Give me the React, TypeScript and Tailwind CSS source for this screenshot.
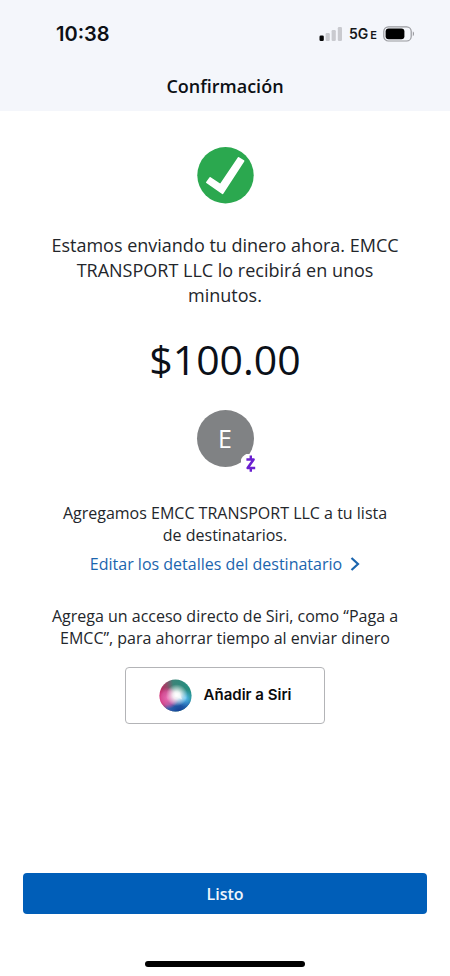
function StatusIcons() {
  return (
    <div className="flex items-center gap-[6px]">
      <svg width="24" height="16" viewBox="0 0 24 16" aria-hidden="true">
        <rect x="0.5" y="9.5" width="4.3" height="5.5" rx="1.3" fill="#050506" />
        <rect x="6.6" y="7" width="4.2" height="8" rx="1.2" fill="#c9cacf" />
        <rect x="12.6" y="4" width="4.2" height="11" rx="1.2" fill="#c9cacf" />
        <rect x="18.8" y="1" width="4.2" height="14" rx="1.2" fill="#c9cacf" />
      </svg>
      <span className="flex items-baseline gap-[2px] font-['Inter',sans-serif] text-[14px] leading-5 font-semibold text-[#17181b]">
        5G<span className="text-[11px] leading-5">E</span>
      </span>
      <svg width="32" height="16" viewBox="0 0 32 16" aria-hidden="true">
        <rect x="0.8" y="0.8" width="27.4" height="14.2" rx="4.6" fill="none" stroke="#98999e" strokeWidth="1.2" />
        <rect x="2.6" y="2.6" width="18.8" height="10.6" rx="3" fill="#000" />
        <path d="M29.8 5.6c1.6.5 1.6 4.1 0 4.6z" fill="#98999e" />
      </svg>
    </div>
  );
}

function CheckBadge() {
  return (
    <svg width="57" height="57" viewBox="0 0 57 57" role="img" aria-label="Completado">
      <circle cx="28.5" cy="28.2" r="28.2" fill="#2ba84f" />
      <path
        d="M41.6 10.8 46.6 14 25.6 46.4 9.8 35.4 13.2 30.8 23.4 37.6Z"
        fill="#fff"
        stroke="#fff"
        strokeWidth="1.6"
        strokeLinejoin="round"
      />
    </svg>
  );
}

function ZelleMark() {
  return (
    <svg width="20" height="20" viewBox="0 0 20 20" role="img" aria-label="Zelle">
      <circle cx="10" cy="10" r="11" fill="#fff" />
      <path d="M9.8 1.6V5M9.8 14.4V17.8" stroke="#6a1fd0" strokeWidth="2.4" />
      <path d="M5.4 5.5H12.6L6.6 13.9H14.2" fill="none" stroke="#6a1fd0" strokeWidth="2.5" strokeLinejoin="round" />
    </svg>
  );
}

function SiriOrb() {
  return (
    <svg width="33" height="33" viewBox="0 0 34 34" aria-hidden="true">
      <defs>
        <linearGradient id="siri-base" x1="0" y1="0.4" x2="1" y2="0.3">
          <stop offset="0" stopColor="#c91f62" />
          <stop offset="0.25" stopColor="#8f4c68" />
          <stop offset="0.45" stopColor="#3c8478" />
          <stop offset="1" stopColor="#1f8f80" />
        </linearGradient>
        <radialGradient id="siri-blue" cx="0.62" cy="1" r="0.55">
          <stop offset="0" stopColor="#123f94" />
          <stop offset="0.7" stopColor="#2a68b8" stopOpacity="0.9" />
          <stop offset="1" stopColor="#2b80c0" stopOpacity="0" />
        </radialGradient>
        <radialGradient id="siri-pink" cx="0.26" cy="0.58" r="0.34">
          <stop offset="0" stopColor="#ea6db3" />
          <stop offset="0.6" stopColor="#e058a5" stopOpacity="0.75" />
          <stop offset="1" stopColor="#e04b9c" stopOpacity="0" />
        </radialGradient>
        <radialGradient id="siri-sky" cx="0.8" cy="0.58" r="0.28">
          <stop offset="0" stopColor="#5cc3f2" />
          <stop offset="1" stopColor="#3aa5df" stopOpacity="0" />
        </radialGradient>
        <radialGradient id="siri-glow" cx="0.54" cy="0.49" r="0.34">
          <stop offset="0" stopColor="#fff" />
          <stop offset="0.35" stopColor="#fff" stopOpacity="0.85" />
          <stop offset="1" stopColor="#fff" stopOpacity="0" />
        </radialGradient>
      </defs>
      <circle cx="17" cy="17" r="16.5" fill="url(#siri-base)" />
      <circle cx="17" cy="17" r="16.5" fill="url(#siri-blue)" />
      <circle cx="17" cy="17" r="16.5" fill="url(#siri-pink)" />
      <circle cx="17" cy="17" r="16.5" fill="url(#siri-sky)" />
      <circle cx="17" cy="17" r="16.5" fill="url(#siri-glow)" />
      <path d="M16 14 21 14 22 17 24 21 19 19 16 18Z" fill="#fff" opacity="0.5" />
    </svg>
  );
}

export default function App() {
  return (
    <div className="flex min-h-screen flex-col bg-white font-['Open_Sans',sans-serif] text-[#23262b]">
      <header className="bg-[#f4f6fb] pb-3 text-[#0d1015]">
        <div className="flex items-center justify-between pt-[22px] pr-[35px] pl-14">
          <span className="font-['Inter',sans-serif] text-xl leading-6 font-semibold">10:38</span>
          <StatusIcons />
        </div>
        <h1 className="pt-7 text-center text-lg leading-[25px] font-semibold">Confirmación</h1>
      </header>

      <main className="flex flex-1 flex-col items-center px-6 pt-9 text-center">
        <CheckBadge />
        <p className="mt-[29px] max-w-[370px] text-lg leading-[25px]">
          Estamos enviando tu dinero ahora. EMCC TRANSPORT LLC lo recibirá en unos minutos.
        </p>
        <p className="mt-6 text-[41px] leading-[54px] text-[#0b1018]">$100.00</p>

        <div className="relative mt-6 flex size-[57px] items-center justify-center rounded-full bg-[#808284] text-[25px] text-white">
          E
          <span className="absolute -right-[7px] -bottom-[7px]">
            <ZelleMark />
          </span>
        </div>

        <p className="mt-[35px] max-w-[335px] text-base leading-[22px]">
          Agregamos EMCC TRANSPORT LLC a tu lista de destinatarios.
        </p>
        <a href="#detalles" className="mt-[7px] flex items-center gap-2 text-base leading-[22px] text-[#1b65ae]">
          Editar los detalles del destinatario
          <svg width="10" height="14" viewBox="0 0 10 14" fill="none" stroke="currentColor" strokeWidth="2.2" aria-hidden="true">
            <path d="M1.5 1 8 7 1.5 13" />
          </svg>
        </a>

        <p className="mt-[30px] max-w-[360px] text-base leading-[22px]">
          Agrega un acceso directo de Siri, como “Paga a EMCC”, para ahorrar tiempo al enviar dinero
        </p>
        <button
          type="button"
          className="mt-[18px] flex h-[57px] w-[200px] items-center justify-center gap-3 rounded-[4px] border border-[#b3b4b7] bg-white font-['Inter',sans-serif] text-[15px] font-semibold text-[#0b0b0d]"
        >
          <SiriOrb />
          Añadir a Siri
        </button>
      </main>

      <footer className="flex flex-col items-center px-[23px] pt-8 pb-[9px]">
        <button type="button" className="h-[41px] w-full rounded-[4px] bg-[#005eb8] text-base font-semibold text-[#eef5fc]">
          Listo
        </button>
        <div className="mt-[47px] h-[6px] w-40 rounded-full bg-black" />
      </footer>
    </div>
  );
}
